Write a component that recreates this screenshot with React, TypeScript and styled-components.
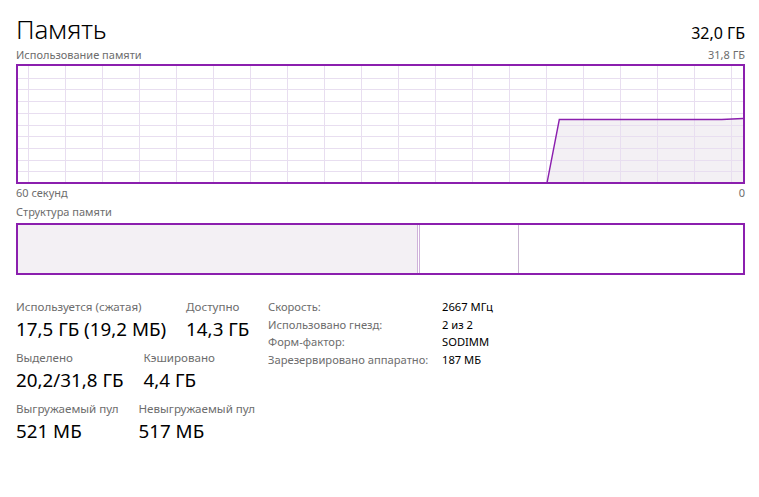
import React from "react";
import styled, { createGlobalStyle } from "styled-components";

const Global = createGlobalStyle`
  html, body { margin: 0; padding: 0; background: #ffffff; }
  body { font-family: "Noto Sans", "Open Sans", sans-serif; color: #000; }
`;

const PURPLE = "#8b1fae";
const GRID = "#e8def0";
const FILL = "#f3f0f4";

const Page = styled.div`
  width: 759px;
  height: 497px;
  box-sizing: border-box;
  padding: 12px 14px 0 16px;
  display: flex;
  flex-direction: column;
`;

const Header = styled.div`
  display: flex;
  justify-content: space-between;
  align-items: baseline;
  height: 36px;
`;

const Title = styled.h1`
  margin: 0;
  font-size: 26px;
  font-weight: 300;
  line-height: 34px;
  letter-spacing: -0.2px;
`;

const Total = styled.div`
  font-size: 16px;
  font-weight: 400;
  line-height: 20px;
`;

const CaptionRow = styled.div<{ $top?: number }>`
  display: flex;
  justify-content: space-between;
  font-size: 11px;
  color: #6d6d6d;
  line-height: 14px;
  margin-top: ${(p) => p.$top ?? 0}px;
`;

const ChartBox = styled.div`
  margin-top: 2px;
  height: 120px;
  box-sizing: border-box;
  border: 2px solid ${PURPLE};
  position: relative;
  overflow: hidden;
`;

const StructBox = styled.div`
  margin-top: 4px;
  height: 52px;
  box-sizing: border-box;
  border: 2px solid ${PURPLE};
  display: flex;
`;

const Segment = styled.div<{ $w?: number; $bg?: string; $line?: string }>`
  ${(p) => (p.$w !== undefined ? `width: ${p.$w}px;` : "flex: 1;")}
  background: ${(p) => p.$bg ?? "#fff"};
  ${(p) => (p.$line ? `border-right: 1px solid ${p.$line};` : "")}
  flex-shrink: 0;
`;

const Stats = styled.div`
  margin-top: 24px;
  display: flex;
  align-items: flex-start;
  gap: 20px;
`;

const LeftStats = styled.div`
  display: flex;
  flex-direction: column;
  width: 232px;
`;

const StatRow = styled.div`
  display: flex;
  gap: 20px;
  margin-bottom: 7px;
`;

const Stat = styled.div`
  display: flex;
  flex-direction: column;
`;

const StatLabel = styled.div`
  font-size: 11.6px;
  color: #6d6d6d;
  line-height: 16px;
  white-space: nowrap;
`;

const StatValue = styled.div`
  font-size: 18.8px;
  line-height: 28px;
  color: #000;
  white-space: nowrap;
`;

const InfoTable = styled.div`
  display: grid;
  grid-template-columns: 174px auto;
  align-content: start;
  font-size: 11.2px;
  line-height: 17.7px;
  margin-top: -1px;
`;

const InfoLabel = styled.div`
  color: #6d6d6d;
  white-space: nowrap;
`;

const InfoValue = styled.div`
  color: #000;
  white-space: nowrap;
`;

const UsageChart: React.FC = () => {
  const w = 725;
  const h = 116;
  const vx: number[] = [];
  for (let x = 10; x < w; x += 37) vx.push(x);
  const hy: number[] = [];
  for (let i = 1; i < 10; i++) hy.push(Math.round(i * 11.7) + 0.5);
  return (
    <svg width={w} height={h} viewBox={`0 0 ${w} ${h}`} style={{ display: "block" }}>
      <polygon points={`529,117 541.3,53.5 703.7,53.5 725,52.5 725,117`} fill={FILL} />
      {vx.map((x) => (
        <line key={"v" + x} x1={x + 0.5} x2={x + 0.5} y1={0} y2={h} stroke={GRID} strokeWidth={1} />
      ))}
      {hy.map((y) => (
        <line key={"h" + y} x1={0} x2={w} y1={y} y2={y} stroke={GRID} strokeWidth={1} />
      ))}
      <polyline
        points={`529,117 541.3,53.5 703.7,53.5 725,52.5`}
        fill="none"
        stroke={PURPLE}
        strokeWidth={1.4}
      />
    </svg>
  );
};

const leftStats = [
  [
    { label: "Используется (сжатая)", value: "17,5 ГБ (19,2 МБ)" },
    { label: "Доступно", value: "14,3 ГБ" },
  ],
  [
    { label: "Выделено", value: "20,2/31,8 ГБ" },
    { label: "Кэшировано", value: "4,4 ГБ" },
  ],
  [
    { label: "Выгружаемый пул", value: "521 МБ" },
    { label: "Невыгружаемый пул", value: "517 МБ" },
  ],
];

const info = [
  ["Скорость:", "2667 МГц"],
  ["Использовано гнезд:", "2 из 2"],
  ["Форм-фактор:", "SODIMM"],
  ["Зарезервировано аппаратно:", "187 МБ"],
];

export default function App() {
  return (
    <>
      <Global />
      <Page>
        <Header>
          <Title>Память</Title>
          <Total>32,0 ГБ</Total>
        </Header>
        <CaptionRow>
          <span>Использование памяти</span>
          <span>31,8 ГБ</span>
        </CaptionRow>
        <ChartBox>
          <UsageChart />
        </ChartBox>
        <CaptionRow $top={2}>
          <span>60 секунд</span>
          <span>0</span>
        </CaptionRow>
        <CaptionRow $top={5}>
          <span>Структура памяти</span>
        </CaptionRow>
        <StructBox>
          <Segment $w={399} $bg={FILL} $line="#cfb2da" />
          <Segment $w={1} $bg="#fff" $line="#cfb2da" />
          <Segment $w={98} $bg="#fff" $line="#c7b6cf" />
          <Segment />
        </StructBox>
        <Stats>
          <LeftStats>
            {leftStats.map((row, i) => (
              <StatRow key={i}>
                {row.map((s) => (
                  <Stat key={s.label}>
                    <StatLabel>{s.label}</StatLabel>
                    <StatValue>{s.value}</StatValue>
                  </Stat>
                ))}
              </StatRow>
            ))}
          </LeftStats>
          <InfoTable>
            {info.map(([l, v]) => (
              <React.Fragment key={l}>
                <InfoLabel>{l}</InfoLabel>
                <InfoValue>{v}</InfoValue>
              </React.Fragment>
            ))}
          </InfoTable>
        </Stats>
      </Page>
    </>
  );
}
